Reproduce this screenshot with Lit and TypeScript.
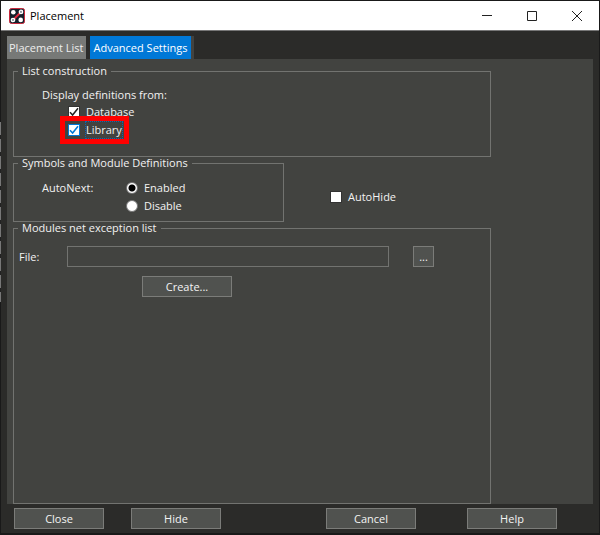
import { LitElement, html, css, svg } from "lit";
import { customElement, state } from "lit/decorators.js";

@customElement("app-root")
export class AppRoot extends LitElement {
  @state() private tab = "advanced";

  static styles = css`
    :host {
      display: flex;
      flex-direction: column;
      box-sizing: border-box;
      min-height: 100vh;
      padding: 1px 1px 2px;
      background:
        repeating-linear-gradient(#777 0 13px, #222 13px 17px) 0 122px / 1px 180px no-repeat,
        #191919;
      color: #f2f2f2;
      font: 11px/16px "Open Sans", "Noto Sans", sans-serif;
    }
    * { box-sizing: border-box; }
    .titlebar {
      display: flex;
      align-items: center;
      height: 30px;
      padding-left: 8px;
      background: #fff;
      color: #000;
      border-bottom: 1px solid #777;
    }
    .logo { width: 16px; height: 16px; }
    h1 { flex: 1; margin: 0 0 0 5px; font: inherit; }
    .winbtn {
      display: flex;
      align-items: center;
      justify-content: center;
      width: 45px;
      height: 28px;
      padding: 0;
      border: 0;
      background: none;
    }
    .body {
      flex: 1;
      display: flex;
      flex-direction: column;
      padding: 5px 6px 4px;
      background: #2b2b29;
    }
    .tabs { display: flex; gap: 4px; height: 23px; }
    .tab {
      padding: 0 2px;
      border: 0;
      background: #777977;
      color: #eee;
      font: inherit;
    }
    .tab.active {
      padding: 0 4px;
      background: #0078d7;
      color: #fff;
      box-shadow: 3px 0 #424340;
    }
    .panel {
      flex: 1;
      display: flex;
      flex-direction: column;
      padding: 6px 102px 0 6px;
      background: #424340;
    }
    fieldset {
      min-width: 0;
      margin: 0;
      padding: 10px 0 6px;
      border: 1px solid #727370;
    }
    legend { margin-left: 4px; padding: 0 4px; line-height: 12px; }
    .source { height: 92px; }
    .heading { padding-left: 28px; }
    .choices { padding-left: 54px; }
    .choice { display: flex; align-items: center; gap: 6px; width: max-content; height: 18px; }
    input[type="checkbox"], input[type="radio"] {
      appearance: none;
      flex: none;
      width: 12px;
      height: 12px;
      margin: 0;
      border: 1px solid #333;
      background: #fff;
      outline: none;
    }
    input[type="radio"] { border-radius: 50%; border-color: #777; }
    input[type="radio"]:checked { background: radial-gradient(circle, #000 3px, #fff 4px); }
    .check { position: relative; display: flex; }
    .check svg { position: absolute; inset: 0; color: #222; pointer-events: none; }
    .check input:not(:checked) + svg { display: none; }
    .focus input { border-color: #0078d7; }
    .focus .check svg { color: #0078d7; }
    .focus .name { outline: 1px dotted #0c68b4; }
    .marked { position: relative; }
    .marked::after {
      content: "";
      position: absolute;
      inset: -5px -7px -5px -8px;
      border: 5px solid #f00;
      pointer-events: none;
    }
    .row { display: flex; align-items: center; gap: 46px; }
    .side { padding-top: 14px; }
    .symbols { flex: 0 0 271px; }
    .autonext { display: grid; grid-template-columns: 84px 1fr; padding-left: 28px; line-height: 18px; }
    .modules { flex: 1; padding: 12px 56px 6px 5px; }
    .modules legend { margin-left: -1px; }
    .file { display: flex; align-items: center; height: 21px; }
    .file label { width: 48px; }
    .file input {
      flex: 1;
      min-width: 0;
      height: 21px;
      margin-right: 24px;
      padding: 0 4px;
      border: 1px solid #727370;
      background: #424340;
      color: inherit;
      font: inherit;
      outline: none;
    }
    .btn {
      width: 90px;
      height: 21px;
      padding: 0;
      border: 1px solid #7b7c79;
      background: #50524f;
      color: #f4f4f4;
      font: inherit;
      line-height: 19px;
    }
    .btn.browse { width: 21px; }
    .btn.create { display: block; margin: 9px 0 0 123px; }
    .actions {
      display: grid;
      grid-template-columns: 90px 27fr 90px 105fr 90px 51fr 90px;
      padding: 4px 36px 0 7px;
    }
    .actions .btn:nth-child(1) { grid-column: 1; }
    .actions .btn:nth-child(2) { grid-column: 3; }
    .actions .btn:nth-child(3) { grid-column: 5; }
    .actions .btn:nth-child(4) { grid-column: 7; }
  `;

  private check(name: string, checked: boolean, cls = "") {
    return html`<label class="choice ${cls}">
      <span class="check">
        <input type="checkbox" .checked=${checked} />
        <svg width="12" height="12" viewBox="0 0 12 12" fill="none" stroke="currentColor" stroke-width="1.5">
          <path d="M2 6.2 4.6 9 10 2.2" />
        </svg>
      </span>
      <span class="name">${name}</span>
    </label>`;
  }

  private winButton(name: string, shape: unknown) {
    return html`<button class="winbtn" aria-label=${name}>
      <svg width="12" height="12" viewBox="0 0 12 12" fill="none" stroke="#222">${shape}</svg>
    </button>`;
  }

  render() {
    return html`
      <header class="titlebar">
        <svg class="logo" viewBox="0 0 16 16" aria-hidden="true">
          <rect x=".5" y=".5" width="15" height="15" rx="2" fill="#14202b" stroke="#c8283c" />
          <path d="M4.5 11.5 12 4" stroke="#e0283c" stroke-width="1.8" />
          <g fill="#fff">
            <circle cx="4.3" cy="4.3" r="2.3" />
            <circle cx="11.7" cy="11.9" r="2.3" />
          </g>
          <g fill="#8b939a" stroke="#fff" stroke-width="1.3">
            <circle cx="12" cy="3.9" r="1.7" />
            <circle cx="4" cy="12" r="1.7" />
          </g>
        </svg>
        <h1>Placement</h1>
        ${this.winButton("Minimize", svg`<path d="M1 5.5h10" />`)}
        ${this.winButton("Maximize", svg`<path d="M1.5 1.5h9v9h-9z" />`)}
        ${this.winButton("Close window", svg`<path d="m1 1 10 10M11 1 1 11" />`)}
      </header>
      <main class="body">
        <div class="tabs" role="tablist">
          ${[["list", "Placement List"], ["advanced", "Advanced Settings"]].map(
            ([id, name]) => html`<button
              class="tab ${this.tab === id ? "active" : ""}"
              role="tab"
              aria-selected=${this.tab === id}
              @click=${() => (this.tab = id)}
            >${name}</button>`
          )}
        </div>
        <section class="panel">
          <fieldset class="source">
            <legend>List construction</legend>
            <div class="heading">Display definitions from:</div>
            <div class="choices">
              ${this.check("Database", true)}
              ${this.check("Library", true, "focus marked")}
            </div>
          </fieldset>
          <div class="row">
            <fieldset class="symbols">
              <legend>Symbols and Module Definitions</legend>
              <div class="autonext">
                <div>AutoNext:</div>
                <div>
                  <label class="choice"><input type="radio" name="autonext" checked />Enabled</label>
                  <label class="choice"><input type="radio" name="autonext" />Disable</label>
                </div>
              </div>
            </fieldset>
            <div class="side">${this.check("AutoHide", false)}</div>
          </div>
          <fieldset class="modules">
            <legend>Modules net exception list</legend>
            <div class="file">
              <label for="file">File:</label>
              <input id="file" type="text" />
              <button class="btn browse" aria-label="Browse">...</button>
            </div>
            <button class="btn create">Create...</button>
          </fieldset>
        </section>
        <footer class="actions">
          ${["Close", "Hide", "Cancel", "Help"].map((n) => html`<button class="btn">${n}</button>`)}
        </footer>
      </main>
    `;
  }
}
